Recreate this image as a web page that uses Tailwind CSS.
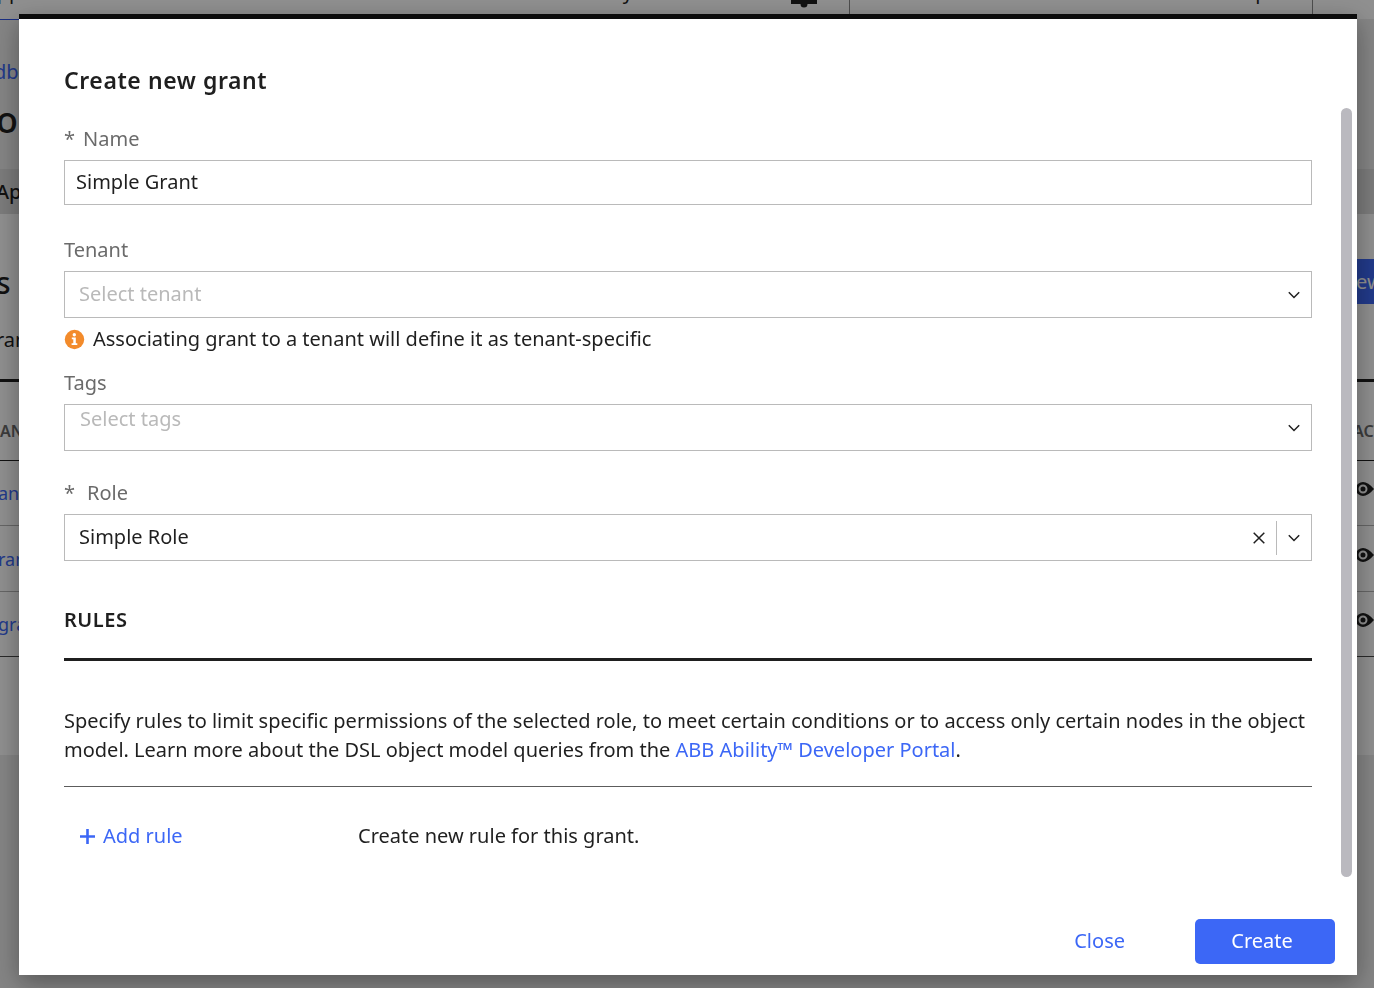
<!DOCTYPE html>
<html lang="en">
<head>
<meta charset="utf-8">
<title>Create new grant</title>
<script src="https://cdn.jsdelivr.net/npm/@tailwindcss/browser@4"></script>
</head>
<body class="h-screen overflow-hidden bg-[#ececec] font-['Noto_Sans',sans-serif] text-xl leading-6 text-[#1f1f1f]">

<!-- Page behind the dialog -->
<div class="flex h-full flex-col" aria-hidden="true">
  <header class="flex h-[19px] shrink-0 overflow-hidden bg-white">
    <nav class="-mt-5 flex flex-1 items-start justify-between pr-[158px]">
      <span class="-ml-4">Applications</span>
      <span>Authentication</span>
      <span>Security</span>
    </nav>
    <svg class="mr-8 h-2 w-[26px] shrink-0" viewBox="0 0 26 8" fill="#1f1f1f"><path d="M0 0h26v4H16.500a3.500 3.500 0 0 1-7 0H0z"/></svg>
    <div class="flex w-[464px] shrink-0 justify-end border-x border-[#8a8a8a] pr-7"><span class="-mt-5">Example</span></div>
    <div class="w-[61px] shrink-0"></div>
  </header>
  <div class="h-[150px] shrink-0 overflow-hidden">
    <div class="-mt-px h-0.5 w-[60px] bg-[#2f54e8]"></div>
    <p class="-ml-1.5 mt-10 text-[#3c67f6]">db</p>
    <p class="-ml-1 mt-4 text-4xl font-medium leading-[40px]">o</p>
  </div>
  <div class="flex h-[45px] shrink-0 items-center bg-[#dcdcdc]"><span class="-ml-1 font-medium">Ap</span></div>
  <main class="h-[541px] shrink-0 bg-white">
    <div class="flex h-[165px] justify-between">
      <div class="-ml-1 pt-[53px]"><p class="text-3xl font-medium leading-8">s</p><p class="mt-[29px]">ran</p></div>
      <div class="mt-[45px] flex h-[45px] w-[24px] items-center overflow-hidden bg-[#3c67f6] pl-1.5 text-white">ew</div>
    </div>
    <div class="flex h-[82px] items-center justify-between border-b border-t-3 border-[#1f1f1f] pt-5 text-base font-semibold text-[#6b6b6b]"><span>AN</span><span class="w-[21px] overflow-hidden">ACT</span></div>
    <div class="flex h-[65px] items-center justify-between border-b border-[#b4b4b4] text-lg text-[#3c67f6]"><span class="-ml-0.5">ant</span><svg class="mb-2 h-4 w-5" viewBox="0 0 20 16"><path d="M0 8Q8-6 20 8 8 22 0 8z" fill="#1f1f1f"/><circle cx="9" cy="8" r="3.500" fill="#1f1f1f" stroke="#fff" stroke-width="2"/></svg></div>
    <div class="flex h-[66px] items-center justify-between border-b border-[#b4b4b4] text-lg text-[#3c67f6]"><span class="-ml-0.5">ran</span><svg class="mb-2 h-4 w-5" viewBox="0 0 20 16"><path d="M0 8Q8-6 20 8 8 22 0 8z" fill="#1f1f1f"/><circle cx="9" cy="8" r="3.500" fill="#1f1f1f" stroke="#fff" stroke-width="2"/></svg></div>
    <div class="flex h-[65px] items-center justify-between border-b border-[#4a4a4a] text-lg text-[#3c67f6]"><span class="-ml-0.5">gra</span><svg class="mb-2 h-4 w-5" viewBox="0 0 20 16"><path d="M0 8Q8-6 20 8 8 22 0 8z" fill="#1f1f1f"/><circle cx="9" cy="8" r="3.500" fill="#1f1f1f" stroke="#fff" stroke-width="2"/></svg></div>
  </main>
</div>

<!-- Dialog -->
<div class="fixed inset-0 flex bg-black/44 pt-[14px] pr-[17px] pb-[13px] pl-[19px]">
  <form role="dialog" aria-modal="true" aria-labelledby="title" class="flex flex-1 flex-col border-t-5 border-[#0c0c0c] bg-white shadow-[0_8px_24px_rgba(0,0,0,0.35)]">
    <h1 id="title" class="px-[45px] pt-[45px] pb-3 text-[23px] leading-8 font-semibold tracking-wide">Create new grant</h1>

    <div class="flex flex-1 pr-[5px] pl-[45px]">
      <div class="flex-1 pt-[19px]">
        <label for="name" class="block text-[#6b6b6b]"><span class="mr-2">*</span>Name</label>
        <input id="name" type="text" value="Simple Grant" class="mt-[9px] block h-[45px] w-full border border-[#bababa] px-[11px] pb-0.5 outline-none">

        <label for="tenant" class="mt-[33px] block text-[#6b6b6b]">Tenant</label>
        <div class="relative mt-[9px]">
          <select id="tenant" class="block h-[47px] w-full appearance-none border border-[#bababa] bg-white px-[14px] pb-0.5 text-[#b9b9b9] outline-none"><option>Select tenant</option></select>
          <svg class="pointer-events-none absolute top-5 right-3 h-2 w-3" viewBox="0 0 12 8" fill="none" stroke="#1f1f1f" stroke-width="1.500"><path d="M.8 1.300 6 6.500l5.200-5.200"/></svg>
        </div>
        <p class="mt-[9px] flex items-center gap-2">
          <svg class="size-[21px]" viewBox="0 0 21 21"><circle cx="10.500" cy="10.500" r="9.700" fill="#f38b2b"/><g fill="#fff"><circle cx="10.300" cy="5.800" r="1.700"/><path d="M7.800 8.600h4v5.700h1.500V16H7.600v-1.700h1.700v-4H7.800z"/></g></svg>
          Associating grant to a tenant will define it as tenant-specific
        </p>

        <label for="tags" class="mt-5 block text-[#6b6b6b]">Tags</label>
        <div class="relative mt-[9px]">
          <select id="tags" class="block h-[47px] w-full appearance-none border border-[#bababa] bg-white px-[15px] pb-[18px] text-[#b9b9b9] outline-none"><option>Select tags</option></select>
          <svg class="pointer-events-none absolute top-5 right-3 h-2 w-3" viewBox="0 0 12 8" fill="none" stroke="#1f1f1f" stroke-width="1.500"><path d="M.8 1.300 6 6.500l5.200-5.200"/></svg>
        </div>

        <label for="role" class="mt-[30px] block text-[#6b6b6b]"><span class="mr-3">*</span>Role</label>
        <div class="relative mt-[9px]">
          <select id="role" class="block h-[47px] w-full appearance-none border border-[#bababa] bg-white px-[14px] pb-0.5 outline-none"><option>Simple Role</option></select>
          <div class="pointer-events-none absolute inset-y-0 right-3 flex items-center">
            <button type="button" aria-label="Clear role" class="pointer-events-auto mr-[11px]"><svg class="size-3" viewBox="0 0 12 12" stroke="#1f1f1f" stroke-width="1.500"><path d="m.7.7 10.600 10.600M11.300.7.700 11.300"/></svg></button>
            <span class="mr-[11px] h-[34px] w-px bg-[#bababa]"></span>
            <svg class="h-2 w-3" viewBox="0 0 12 8" fill="none" stroke="#1f1f1f" stroke-width="1.500"><path d="M.8 1.300 6 6.500l5.200-5.200"/></svg>
          </div>
        </div>

        <h2 class="mt-[47px] border-b-3 border-[#1f1f1f] pb-[26px] font-semibold tracking-wide">RULES</h2>
        <p class="mt-[45px] border-b border-[#5c5c5c] pb-[22px] leading-[29px]">Specify rules to limit specific permissions of the selected role, to meet certain conditions or to access only certain nodes in the object model. Learn more about the DSL object model queries from the <a href="#" class="text-[#3c67f6]">ABB Ability™ Developer Portal</a>.</p>
        <div class="mt-[37px] flex items-center">
          <div class="w-[294px] pl-4">
            <button type="button" class="flex items-center gap-2 text-[#3c67f6]"><svg class="size-[15px]" viewBox="0 0 15 15" stroke="#3c67f6" stroke-width="2.600"><path d="M7.500 0v15M0 7.500h15"/></svg>Add rule</button>
          </div>
          <p>Create new rule for this grant.</p>
        </div>
      </div>
      <div class="ml-[29px] w-[11px] rounded-full bg-[#bab9bf]"></div>
    </div>

    <div class="flex justify-end gap-[35px] pt-[42px] pr-[22px] pb-[11px]">
      <button type="button" class="h-[45px] px-[35px] pb-0.5 text-[#3c67f6]">Close</button>
      <button type="submit" class="h-[45px] w-[140px] rounded-[5px] bg-[#3c67f6] pr-1.5 pb-0.5 text-white">Create</button>
    </div>
  </form>
</div>
</body>
</html>
